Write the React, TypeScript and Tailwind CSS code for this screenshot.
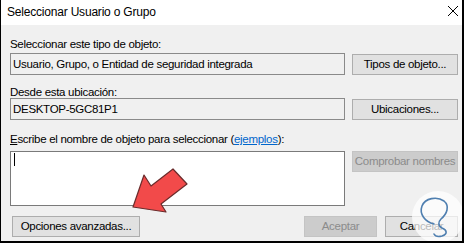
export default function App() {
  return (
    <div className="relative h-[243px] w-[464px] overflow-hidden border-b-2 border-l border-r-2 border-black bg-[#f0f0f0] font-['Liberation_Sans',Arial,sans-serif] text-[11.5px] leading-[15px] tracking-[-0.3px] text-black">
      {/* title bar */}
      <div className="flex h-[25px] items-center justify-between bg-white pl-[6px] pr-[3px]">
        <span className="text-[12px] tracking-[-0.2px]">Seleccionar Usuario o Grupo</span>
        <svg width="12" height="12" viewBox="0 0 12 12" className="mb-[3px]">
          <path d="M1 1 L11 11 M11 1 L1 11" stroke="#000" strokeWidth="1" />
        </svg>
      </div>

      <div className="flex flex-col pl-[9px] pr-[4px]">
        <div className="mt-[12px]">Seleccionar este tipo de objeto:</div>
        <div className="mt-[1px] flex items-start gap-[7px]">
          <div className="flex h-[22px] w-[335px] items-center border border-[#8a8a8a] bg-[#f0f0f0] px-[2px]">
            Usuario, Grupo, o Entidad de seguridad integrada
          </div>
          <button className="mt-[1px] h-[21px] w-[106px] whitespace-nowrap border border-[#adadad] bg-[#e1e1e1]">
            Tipos de objeto...
          </button>
        </div>

        <div className="mt-[10px]">Desde esta ubicación:</div>
        <div className="mt-[-2px] flex items-start gap-[7px]">
          <div className="flex h-[22px] w-[335px] items-center border border-[#8a8a8a] bg-[#f0f0f0] px-[2px]">
            DESKTOP-5GC81P1
          </div>
          <button className="mt-[1px] h-[21px] w-[106px] whitespace-nowrap border border-[#adadad] bg-[#e1e1e1]">
            Ubicaciones...
          </button>
        </div>

        <div className="mt-[12px]">
          <span className="underline">E</span>scribe el nombre de objeto para seleccionar (
          <span className="text-[#0066cc] underline">ejemplos</span>):
        </div>
        <div className="mt-[4px] flex items-start gap-[7px]">
          <div className="h-[55px] w-[335px] border border-[#7a7a7a] bg-white pl-[3px] pt-[1px]">
            <div className="h-[13px] w-px bg-black" />
          </div>
          <button className="h-[21px] w-[106px] whitespace-nowrap border border-[#c4c4c4] bg-[#cccccc] text-[#8b8b8b]">
            Comprobar nombres
          </button>
        </div>

        <div className="mt-[10px] flex items-center">
          <button className="ml-[2px] h-[21px] w-[128px] whitespace-nowrap border border-[#adadad] bg-[#e1e1e1]">
            Opciones avanzadas...
          </button>
          <div className="flex-1" />
          <button className="h-[21px] w-[73px] border border-[#c4c4c4] bg-[#cccccc] text-[#8b8b8b]">
            Aceptar
          </button>
          <button className="ml-[8px] h-[21px] w-[73px] border border-[#adadad] bg-[#e1e1e1]">
            Cancelar
          </button>
        </div>
      </div>

      {/* red arrow annotation */}
      <svg className="pointer-events-none absolute left-[-1px] top-0" width="464" height="243">
        <polygon
          points="133,207 144,175 151,186 173,169 187,184 161,204 166,212"
          fill="#f24a4a"
          stroke="#6a2b2b"
          strokeWidth="1.2"
          strokeLinejoin="round"
        />
      </svg>

      {/* watermark */}
      <svg className="pointer-events-none absolute left-[410px] top-[190px]" width="56" height="56" viewBox="0 0 56 56">
        <circle cx="27" cy="27" r="26" fill="#ffffff" fillOpacity="0.72" />
        <path
          d="M23 34 C14 32 8 24 11 16 C14 8 26 6 33 11 C39 16 36 24 30 29 C27 32 27 36 31 38 C36 40 37 44 31 46 C27 47 24 46 23 44"
          fill="none"
          stroke="#4f7fb0"
          strokeWidth="1.6"
          strokeLinecap="round"
        />
      </svg>
    </div>
  );
}
